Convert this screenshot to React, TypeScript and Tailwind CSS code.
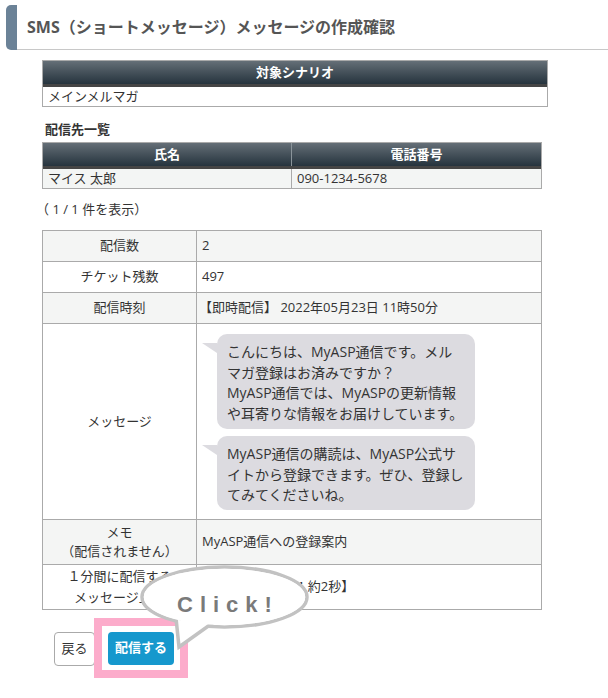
import React from "react";

const Row = ({
  label,
  children,
  bg,
  h,
}: {
  label: React.ReactNode;
  children: React.ReactNode;
  bg: string;
  h: string;
}) => (
  <div className={`flex border-b border-[#aaaaaa] ${bg}`}>
    <div className={`w-[154px] shrink-0 border-r border-[#aaaaaa] flex items-center justify-center text-center ${h}`}>
      {label}
    </div>
    <div className="flex-1 flex items-center pl-[5px]">{children}</div>
  </div>
);

const Bubble = ({ lines, pad }: { lines: string[]; pad: string }) => (
  <div className="relative ml-[20px] w-[258px] rounded-[10px] bg-[#dcdbe0] pl-[10px] text-[14px] leading-[20.5px] text-[#333]">
    <div className="absolute left-[-15px] top-[9px] w-0 h-0 border-t-[10px] border-t-[#dcdbe0] border-l-[15px] border-l-transparent" />
    <div className={pad}>
      {lines.map((l, i) => (
        <div key={i} className="whitespace-nowrap">
          {l}
        </div>
      ))}
    </div>
  </div>
);

export default function App() {
  return (
    <div className="relative w-[608px] h-[698px] bg-white text-[#333] font-['Open_Sans','Noto_Sans_CJK_JP',sans-serif] text-[13px] overflow-hidden">
      {/* Header */}
      <div className="flex pt-[5px] pl-[6px]">
        <div className="w-[11px] h-[45px] rounded-l-[5px] bg-[#6b8297]" />
        <div className="flex-1 h-[45px] border-b border-[#c8c8c8] flex items-center pl-[10px] pb-[1px]">
          <span className="text-[16px] font-bold text-[#555] tracking-[0px]">
            SMS（ショートメッセージ）メッセージの作成確認
          </span>
        </div>
      </div>

      {/* Table 1 */}
      <div className="ml-[42px] mt-[10px] w-[506px] border border-[#aaaaaa]">
        <div className="h-[26px] bg-linear-to-b from-[#656f77] to-[#26343e] flex items-center justify-center text-white font-bold text-[13px] border-b-[3px] border-[#454545]">
          対象シナリオ
        </div>
        <div className="h-[19px] leading-[19px] pl-[5px]">メインメルマガ</div>
      </div>

      {/* label */}
      <div className="ml-[45px] mt-[12px] h-[20px] leading-[20px] font-bold">配信先一覧</div>

      {/* Table 2 */}
      <div className="ml-[42px] mt-[3px] w-[500px] border border-[#aaaaaa]">
        <div className="flex h-[26px] bg-linear-to-b from-[#656f77] to-[#26343e] text-white font-bold border-b-[3px] border-[#454545]">
          <div className="w-[249px] border-r border-[#8a949a] flex items-center justify-center">氏名</div>
          <div className="flex-1 flex items-center justify-center">電話番号</div>
        </div>
        <div className="flex h-[19px] leading-[19px] bg-[#f3f5f4]">
          <div className="w-[249px] border-r border-[#aaaaaa] pl-[5px]">マイス 太郎</div>
          <div className="flex-1 pl-[5px]">090-1234-5678</div>
        </div>
      </div>

      <div className="ml-[36px] mt-[10px] h-[20px] leading-[20px]">（ 1 / 1 件を表示）</div>

      {/* Table 3 */}
      <div className="ml-[42px] mt-[11px] w-[500px] border-l border-r border-t border-[#aaaaaa]">
        <Row label="配信数" bg="bg-[#f4f5f4]" h="h-[30px]">
          2
        </Row>
        <Row label="チケット残数" bg="bg-white" h="h-[30px]">
          497
        </Row>
        <Row label="配信時刻" bg="bg-[#f4f5f4]" h="h-[30px]">
          <span className="-ml-[3px]">【即時配信】 2022年05月23日 11時50分</span>
        </Row>
        <div className="flex border-b border-[#aaaaaa] bg-white">
          <div className="w-[154px] shrink-0 border-r border-[#aaaaaa] flex items-center justify-center">
            メッセージ
          </div>
          <div className="flex-1 flex flex-col gap-[7px] pt-[10px] pb-[9px]">
            <Bubble
              pad="pt-[8px] pb-[5px]"
              lines={[
                "こんにちは、MyASP通信です。メル",
                "マガ登録はお済みですか？",
                "MyASP通信では、MyASPの更新情報",
                "や耳寄りな情報をお届けしています。",
              ]}
            />
            <Bubble
              pad="pt-[8px] pb-[4px]"
              lines={[
                "MyASP通信の購読は、MyASP公式サ",
                "イトから登録できます。ぜひ、登録し",
                "てみてくださいね。",
              ]}
            />
          </div>
        </div>
        <Row
          label={
            <div className="leading-[19px]">
              <div>メモ</div>
              <div>（配信されません）</div>
            </div>
          }
          bg="bg-[#f4f5f4]"
          h="h-[44px]"
        >
          MyASP通信への登録案内
        </Row>
        <Row
          label={
            <div className="leading-[21px]">
              <div>１分間に配信する</div>
              <div>メッセージ上限</div>
            </div>
          }
          bg="bg-white"
          h="h-[44px]"
        >
          30通【間隔上限：約2秒】
        </Row>
      </div>

      {/* Buttons */}
      <div className="flex items-start ml-[54px] mt-[8px]">
        <button className="mt-[14px] w-[41px] h-[34px] rounded-[4px] border border-[#aaaaaa] bg-white text-[13px] text-[#333] flex items-center justify-center">
          戻る
        </button>
        <div className="-ml-px border-[8px] border-[#fcaccb] pl-[6px] pr-[6px] pt-[6px] pb-[5px] bg-white">
          <button className="w-[66px] h-[33px] rounded-[4px] bg-[#1698cd] text-white font-bold text-[13px] flex items-center justify-center">
            配信する
          </button>
        </div>
      </div>

      {/* Click! bubble overlay */}
      <svg
        className="absolute left-[140px] top-[565px]"
        width="172"
        height="86"
        viewBox="0 0 172 86"
      >
        <ellipse cx="84.5" cy="32" rx="82.5" ry="30" fill="#ffffff" stroke="#c2c2c2" strokeWidth="3.5" />
        <polygon points="36,53 39,82 74,57" fill="#ffffff" stroke="#c2c2c2" strokeWidth="3.5" strokeLinejoin="miter" />
        <ellipse cx="84.5" cy="32" rx="80.7" ry="28.2" fill="#ffffff" />
      </svg>
      <div className="absolute left-[177px] top-[594px] text-[22px] leading-[22px] font-bold tracking-[7px] text-[#7a7a7a] font-['Liberation_Sans',Arial,sans-serif] whitespace-nowrap">
        Click!
      </div>
    </div>
  );
}
